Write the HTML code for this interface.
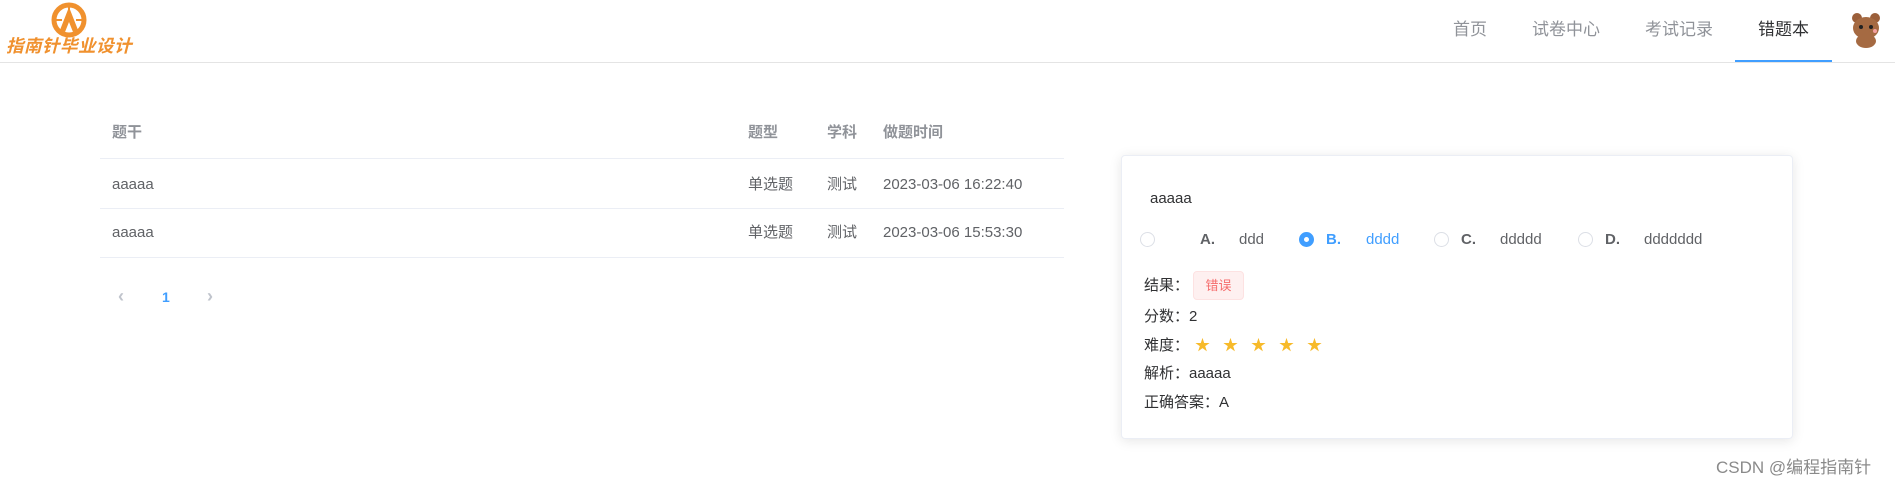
<!DOCTYPE html>
<html><head><meta charset="utf-8"><style>
*{margin:0;padding:0;box-sizing:border-box}
body{width:1895px;height:488px;background:#fff;position:relative;overflow:hidden;font-family:"Liberation Sans","Noto Sans CJK SC",sans-serif;color:#606266}
.a{position:absolute;white-space:nowrap;line-height:1}
.hdr{position:absolute;left:0;top:0;width:1895px;height:63px;border-bottom:1px solid #e4e4e4}
.nav{font-size:17px;color:#909399;top:21px}
.th{font-size:15px;color:#909399;font-weight:bold;top:125px}
.td{font-size:15px;color:#606266}
.line{position:absolute;left:100px;width:964px;height:1px;background:#ebeef5}
.card{position:absolute;left:1121px;top:155px;width:672px;height:284px;border:1px solid #ebeef5;border-radius:4px;box-shadow:0 2px 12px rgba(0,0,0,.1);background:#fff}
.radio{position:absolute;width:15px;height:15px;border:1px solid #dcdfe6;border-radius:50%;top:232px;background:#fff}
.opt{font-size:15px;top:232px}
.lbl{font-size:15px;color:#303133}
.star{position:absolute;top:338px;color:#f7ba2a;font-size:15px;line-height:1}
</style></head><body>
<div class="hdr"></div>
<svg class="a" style="left:51px;top:2px" width="36" height="36" viewBox="0 0 36 36">
<circle cx="18" cy="18" r="15" fill="none" stroke="#f0912e" stroke-width="5"/>
<path d="M18 5 L9 28 L14 30 L18 20 L22 30 L27 28 Z" fill="#f0912e"/>
<path d="M18 3 V12 M5 18 H11 M25 18 H31" stroke="#f0912e" stroke-width="2"/>
</svg>
<div class="a" style="left:6px;top:38px;font-size:17.5px;font-weight:bold;font-style:italic;color:#f0912e;letter-spacing:0.5px">指南针毕业设计</div>
<div class="a nav" style="left:1453px">首页</div>
<div class="a nav" style="left:1532px">试卷中心</div>
<div class="a nav" style="left:1645px">考试记录</div>
<div class="a nav" style="left:1758px;color:#303133">错题本</div>
<div class="a" style="left:1735px;top:60px;width:97px;height:2px;background:#409eff"></div>
<svg class="a" style="left:1848px;top:10px" width="36" height="38" viewBox="0 0 36 38">
<circle cx="9" cy="8" r="5" fill="#9b5f3a"/><circle cx="27" cy="8" r="5" fill="#9b5f3a"/>
<ellipse cx="18" cy="18" rx="13" ry="11" fill="#a56a42"/>
<ellipse cx="18" cy="31" rx="10" ry="7" fill="#a56a42"/>
<circle cx="13" cy="17" r="2" fill="#222"/><circle cx="23" cy="17" r="2" fill="#222"/>
<circle cx="27" cy="21" r="2" fill="#f4a0a0"/>
</svg>

<div class="a th" style="left:112px">题干</div>
<div class="a th" style="left:748px">题型</div>
<div class="a th" style="left:827px">学科</div>
<div class="a th" style="left:883px">做题时间</div>
<div class="line" style="top:158px"></div>
<div class="a td" style="left:112px;top:177px">aaaaa</div>
<div class="a td" style="left:748px;top:177px">单选题</div>
<div class="a td" style="left:827px;top:177px">测试</div>
<div class="a td" style="left:883px;top:177px">2023-03-06 16:22:40</div>
<div class="line" style="top:208px"></div>
<div class="a td" style="left:112px;top:225px">aaaaa</div>
<div class="a td" style="left:748px;top:225px">单选题</div>
<div class="a td" style="left:827px;top:225px">测试</div>
<div class="a td" style="left:883px;top:225px">2023-03-06 15:53:30</div>
<div class="line" style="top:257px"></div>
<div class="a" style="left:118px;top:287px;font-size:18px;color:#c0c4cc;font-weight:bold">‹</div>
<div class="a" style="left:162px;top:290px;font-size:14px;font-weight:bold;color:#409eff">1</div>
<div class="a" style="left:207px;top:287px;font-size:18px;color:#c0c4cc;font-weight:bold">›</div>

<div class="card"></div>
<div class="a lbl" style="left:1150px;top:191px">aaaaa</div>
<div class="radio" style="left:1140px"></div>
<div class="a opt" style="left:1200px;font-weight:bold;color:#606266">A.</div>
<div class="a opt" style="left:1239px">ddd</div>
<div class="radio" style="left:1299px;border:5px solid #409eff;background:#fff"></div>
<div class="a opt" style="left:1326px;font-weight:bold;color:#409eff">B.</div>
<div class="a opt" style="left:1366px;color:#409eff">dddd</div>
<div class="radio" style="left:1434px"></div>
<div class="a opt" style="left:1461px;font-weight:bold">C.</div>
<div class="a opt" style="left:1500px">ddddd</div>
<div class="radio" style="left:1578px"></div>
<div class="a opt" style="left:1605px;font-weight:bold">D.</div>
<div class="a opt" style="left:1644px">ddddddd</div>
<div class="a lbl" style="left:1144px;top:278px">结果：</div>
<div class="a" style="left:1193px;top:271px;width:51px;height:29px;background:#fef0f0;border:1px solid #fde2e2;border-radius:4px;color:#f56c6c;font-size:13px;line-height:27px;text-align:center">错误</div>
<div class="a lbl" style="left:1144px;top:309px">分数：2</div>
<div class="a lbl" style="left:1144px;top:338px">难度：</div>
<div class="star" style="left:1195px">★</div><div class="star" style="left:1223px">★</div><div class="star" style="left:1251px">★</div><div class="star" style="left:1279px">★</div><div class="star" style="left:1307px">★</div>
<div class="a lbl" style="left:1144px;top:366px">解析：aaaaa</div>
<div class="a lbl" style="left:1144px;top:395px">正确答案：A</div>
<div class="a" style="left:1716px;top:459px;font-size:17px;color:#8a8a8a">CSDN @编程指南针</div>
</body></html>
